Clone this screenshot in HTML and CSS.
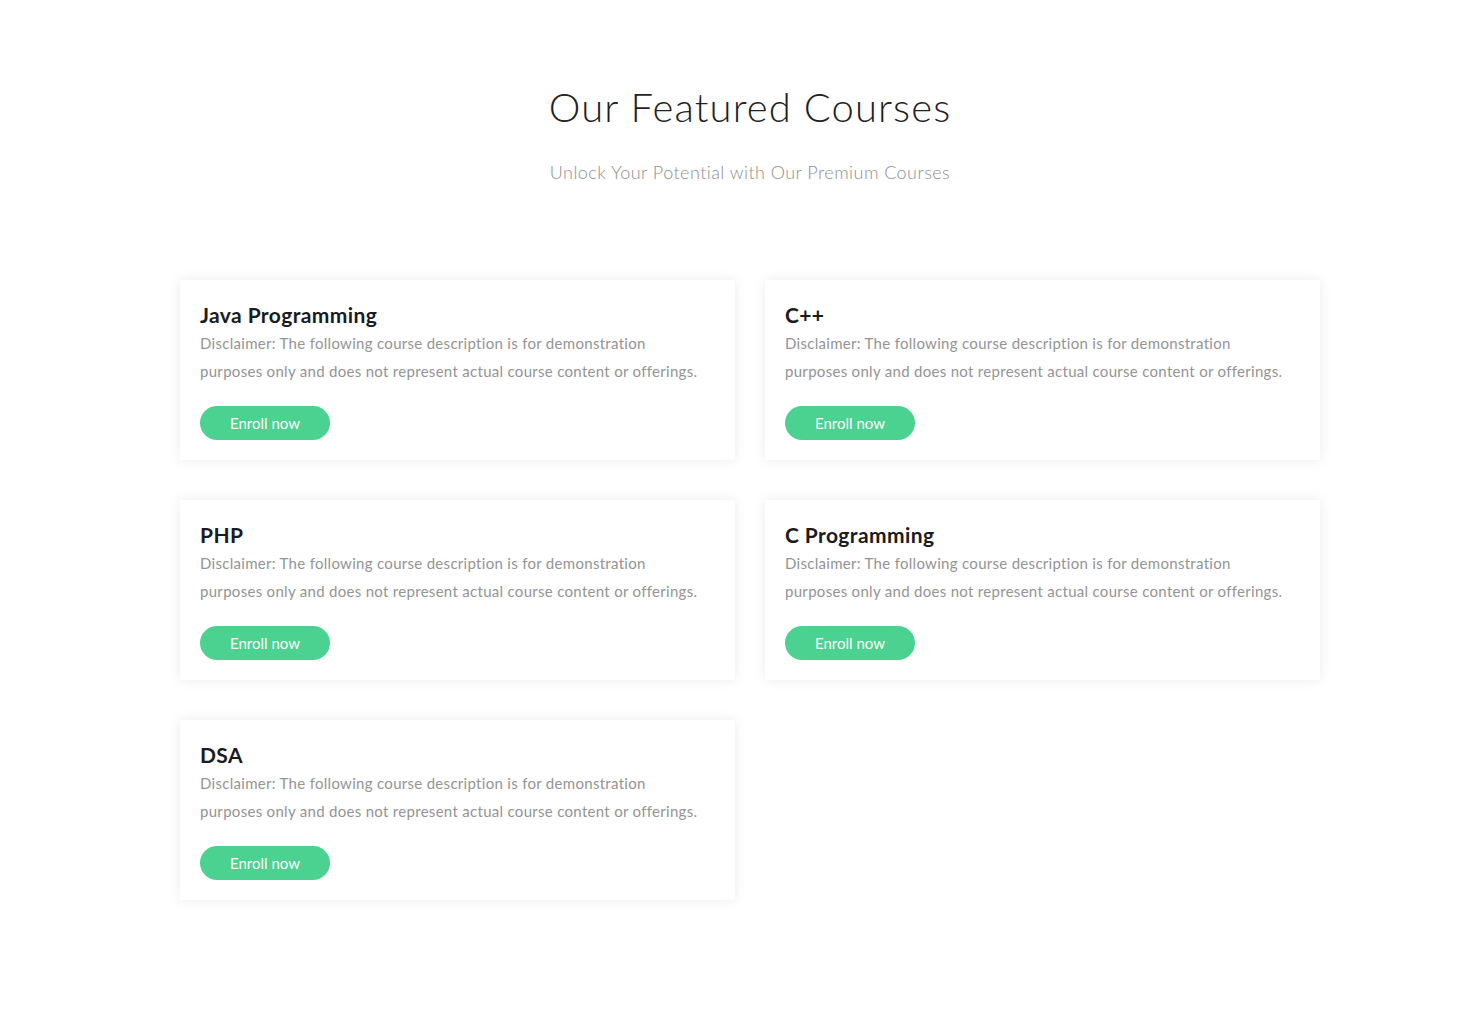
FILE: index.html
```html
<!DOCTYPE html>
<html lang="en">
<head>
<meta charset="utf-8">
<title>Our Featured Courses</title>
<link rel="stylesheet" href="styles.css">
</head>
<body>
<section class="courses">
  <header class="courses-head">
    <h1 class="courses-title">Our Featured Courses</h1>
    <p class="courses-sub">Unlock Your Potential with Our Premium Courses</p>
  </header>
  <div class="course-grid">
    <article class="card">
      <h2 class="card-title">Java Programming</h2>
      <p class="card-text">Disclaimer: The following course description is for demonstration purposes only and does not represent actual course content or offerings.</p>
      <a class="btn" href="#">Enroll now</a>
    </article>
    <article class="card">
      <h2 class="card-title">C++</h2>
      <p class="card-text">Disclaimer: The following course description is for demonstration purposes only and does not represent actual course content or offerings.</p>
      <a class="btn" href="#">Enroll now</a>
    </article>
    <article class="card">
      <h2 class="card-title">PHP</h2>
      <p class="card-text">Disclaimer: The following course description is for demonstration purposes only and does not represent actual course content or offerings.</p>
      <a class="btn" href="#">Enroll now</a>
    </article>
    <article class="card">
      <h2 class="card-title">C Programming</h2>
      <p class="card-text">Disclaimer: The following course description is for demonstration purposes only and does not represent actual course content or offerings.</p>
      <a class="btn" href="#">Enroll now</a>
    </article>
    <article class="card">
      <h2 class="card-title">DSA</h2>
      <p class="card-text">Disclaimer: The following course description is for demonstration purposes only and does not represent actual course content or offerings.</p>
      <a class="btn" href="#">Enroll now</a>
    </article>
  </div>
</section>
</body>
</html>
```
FILE: styles.css
```css
* { box-sizing: border-box; }
html, body { margin: 0; padding: 0; background: #fff; }
body {
  font-family: Lato, "Open Sans", "Liberation Sans", sans-serif;
  color: #222;
}
.courses {
  width: 1140px;
  margin: 0 0 0 180px;
  padding: 83px 0 100px;
}
.courses-head { text-align: center; }
.courses-title {
  margin: 0;
  font-size: 40px;
  line-height: 48px;
  font-weight: 300;
  color: #1f1f24;
  letter-spacing: 1.1px;
}
.courses-sub {
  margin: 28px 0 0;
  font-size: 18px;
  line-height: 26px;
  font-weight: 300;
  color: #8e8e8e;
  letter-spacing: 0.45px;
}
.course-grid {
  margin-top: 95px;
  display: grid;
  grid-template-columns: 555px 555px;
  column-gap: 30px;
  row-gap: 40px;
}
.card {
  background: #fff;
  padding: 20px;
  height: 180px;
  box-shadow: 0 0 12px rgba(0, 0, 0, 0.08);
}
.card-title {
  margin: 0;
  font-size: 21px;
  line-height: 29px;
  font-weight: 700;
  color: #1a1a1f;
  letter-spacing: 0.4px;
}
.card-text {
  margin: 0;
  font-size: 15px;
  line-height: 28px;
  font-weight: 400;
  color: #949494;
  letter-spacing: 0.3px;
  width: 506px;
}
.btn {
  display: inline-block;
  margin-top: 21px;
  width: 130px;
  height: 34px;
  line-height: 34px;
  border-radius: 17px;
  background: #4bd190;
  color: #fff;
  text-align: center;
  font-size: 15px;
  text-decoration: none;
}
```
